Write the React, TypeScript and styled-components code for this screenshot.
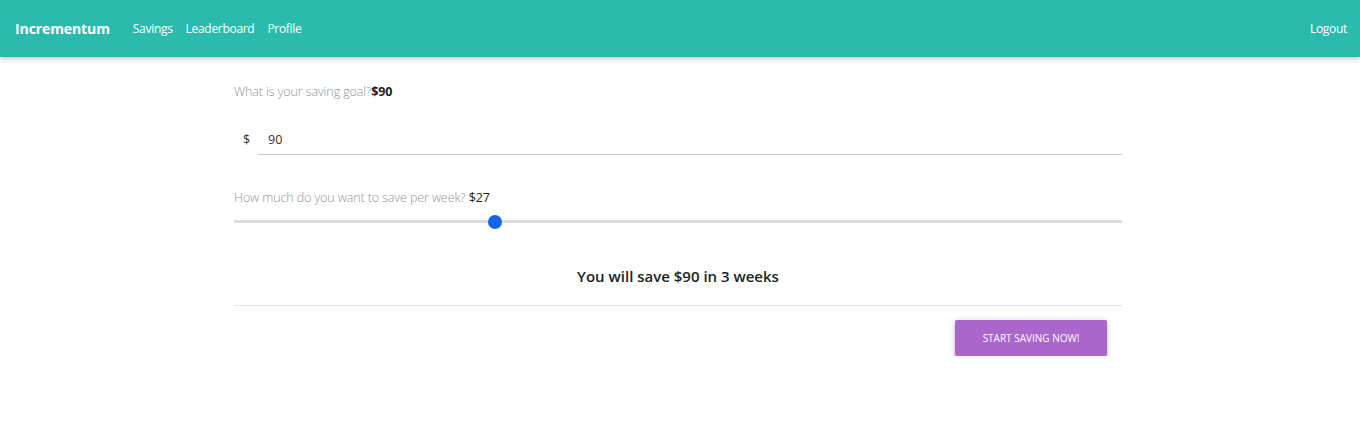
import React from "react";
import styled, { createGlobalStyle } from "styled-components";

const Global = createGlobalStyle`
  html, body { margin: 0; padding: 0; background: #fff; }
  body { font-family: "Open Sans", "Noto Sans", sans-serif; color: #333; }
  * { box-sizing: border-box; }
`;

const Nav = styled.nav`
  height: 57px;
  background: #2bbbad;
  display: flex;
  align-items: center;
  justify-content: space-between;
  padding: 0 13px 0 15px;
  box-shadow: 0 2px 4px rgba(0,0,0,0.16), 0 2px 8px rgba(0,0,0,0.08);
  color: #fff;
`;

const Left = styled.div`
  display: flex;
  align-items: center;
`;

const Brand = styled.a`
  font-size: 14px;
  font-weight: 700;
  margin-right: 23px;
  letter-spacing: -0.1px;
`;

const Links = styled.div`
  display: flex;
  gap: 13px;
`;

const NavLink = styled.a`
  font-size: 12px;
  font-weight: 400;
  letter-spacing: -0.3px;
`;

const Main = styled.main`
  width: 888px;
  margin-left: 234px;
  padding-top: 26px;
  display: flex;
  flex-direction: column;
`;

const Label = styled.div`
  font-size: 12.5px;
  font-weight: 300;
  color: #939393;
  letter-spacing: -0.1px;
  line-height: 18px;
`;

const Strong = styled.span<{ $bold?: boolean }>`
  color: #222;
  font-weight: ${p => (p.$bold ? 700 : 400)};
`;

const InputRow = styled.div`
  display: flex;
  align-items: center;
  margin-top: 23px;
  height: 31px;
`;

const Prefix = styled.span`
  width: 24px;
  padding-left: 9px;
  font-size: 12.5px;
  color: #333;
`;

const Field = styled.div`
  flex: 1;
  height: 30px;
  border-bottom: 1px solid #c9c9c9;
  display: flex;
  align-items: center;
  padding-left: 10px;
  padding-top: 1px;
  font-size: 12.5px;
  color: #333;
`;

const SliderLabel = styled(Label)`
  margin-top: 34px;
`;

const Track = styled.div`
  position: relative;
  height: 3px;
  background: #dcdcdc;
  margin-top: 13px;
`;

const Thumb = styled.div`
  position: absolute;
  top: 50%;
  width: 14px;
  height: 14px;
  margin-left: -7px;
  margin-top: -7px;
  border-radius: 50%;
  background: #1565e6;
`;

const Result = styled.h3`
  margin: 41px 0 0;
  text-align: center;
  font-size: 15px;
  font-weight: 600;
  color: #222;
  line-height: 24px;
`;

const Divider = styled.hr`
  border: none;
  border-top: 1px solid #e0e0e0;
  margin: 17px 0 0;
`;

const Actions = styled.div`
  display: flex;
  justify-content: flex-end;
  padding-right: 15px;
  margin-top: 14px;
`;

const Button = styled.button`
  width: 152px;
  height: 36px;
  border: none;
  border-radius: 2px;
  background: #aa66cc;
  color: #fff;
  font-family: inherit;
  font-size: 10px;
  font-weight: 400;
  text-transform: uppercase;
  box-shadow: 0 3px 3px rgba(0,0,0,0.16), 0 3px 1px -2px rgba(0,0,0,0.14), 0 1px 6px rgba(0,0,0,0.2);
`;

export default function App() {
  const goal = 90;
  const weekly = 27;
  const min = 0;
  const max = 90;
  const pct = ((weekly - min) / (max - min)) * 100 - 0.6;
  const weeks = Math.floor(goal / weekly);
  return (
    <>
      <Global />
      <Nav>
        <Left>
          <Brand>Incrementum</Brand>
          <Links>
            <NavLink>Savings</NavLink>
            <NavLink>Leaderboard</NavLink>
            <NavLink>Profile</NavLink>
          </Links>
        </Left>
        <NavLink>Logout</NavLink>
      </Nav>
      <Main>
        <Label>
          What is your saving goal?<Strong $bold>${goal}</Strong>
        </Label>
        <InputRow>
          <Prefix>$</Prefix>
          <Field>{goal}</Field>
        </InputRow>
        <SliderLabel>
          How much do you want to save per week? <Strong>${weekly}</Strong>
        </SliderLabel>
        <Track>
          <Thumb style={{ left: `${pct}%` }} />
        </Track>
        <Result>You will save ${goal} in {weeks} weeks</Result>
        <Divider />
        <Actions>
          <Button>Start saving now!</Button>
        </Actions>
      </Main>
    </>
  );
}
